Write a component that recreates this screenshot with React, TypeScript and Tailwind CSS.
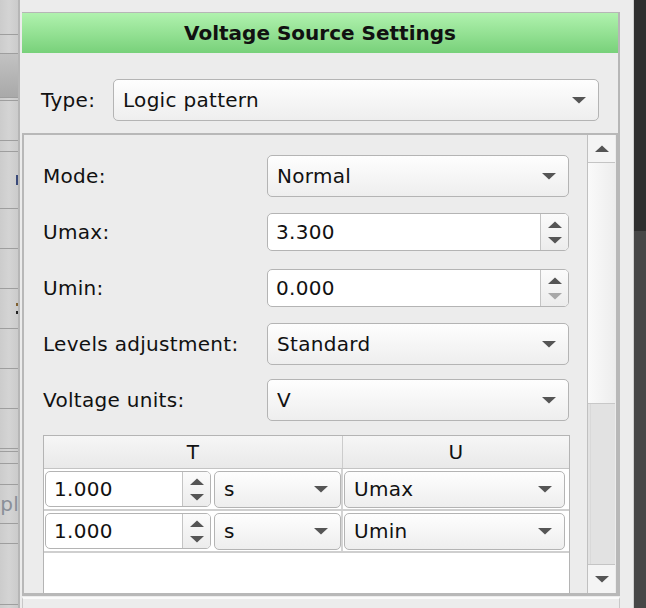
import React from "react";

function Tri({ up = false, color = "#555555" }: { up?: boolean; color?: string }) {
  return (
    <svg width="14" height="7" viewBox="0 0 14 7" className="shrink-0">
      <path d={up ? "M0 7 L7 0.5 L14 7 Z" : "M0 0 L14 0 L7 6.5 Z"} fill={color} />
    </svg>
  );
}

function Combo({ value, className }: { value: string; className: string }) {
  return (
    <div
      className={`flex items-center justify-between rounded-[5px] border border-[#b4b4b4] bg-linear-to-b from-[#fefefe] to-[#eeeeee] pl-[9px] pr-[12px] ${className}`}
    >
      <span>{value}</span>
      <Tri />
    </div>
  );
}

function Spin({
  value,
  className,
  downDisabled = false,
}: {
  value: string;
  className: string;
  downDisabled?: boolean;
}) {
  return (
    <div className={`flex overflow-hidden rounded-[5px] border border-[#b4b4b4] bg-white ${className}`}>
      <div className="flex flex-1 items-center pl-[8px]">{value}</div>
      <div className="flex w-[28px] flex-col items-center justify-center gap-[9px] border-l border-[#c4c4c4] bg-linear-to-b from-[#fbfbfb] to-[#ececec]">
        <Tri up />
        <Tri color={downDisabled ? "#a8a8a8" : "#555555"} />
      </div>
    </div>
  );
}

// cut-off neighbour window on the left edge
const stripCells: { h: number; dark?: boolean; mark?: string }[] = [
  { h: 35 },
  { h: 19 },
  { h: 44, dark: true },
  { h: 3 },
  { h: 40 },
  { h: 11 },
  { h: 57, mark: "bar" },
  { h: 40 },
  { h: 40 },
  { h: 40, mark: "colon" },
  { h: 40 },
  { h: 40 },
  { h: 40 },
  { h: 3 },
  { h: 12 },
  { h: 21 },
  { h: 39, mark: "pl" },
  { h: 20 },
  { h: 61 },
];

function LeftStrip() {
  return (
    <div className="flex w-[20px] shrink-0 flex-col border-r-2 border-[#b6b6b6] bg-linear-to-r from-[#cccccc] via-[#d4d4d4] to-[#cbcbcb]">
      {stripCells.map((c, i) => (
        <div
          key={i}
          style={{ height: c.h }}
          className={`flex shrink-0 items-center justify-end overflow-hidden border-b border-[#9e9e9e] ${
            c.dark ? "bg-linear-to-b from-[#c2c2c2] to-[#a9a9a9]" : ""
          }`}
        >
          {c.mark === "bar" && <div className="h-[10px] w-[2px] bg-[#3a4a7a]" />}
          {c.mark === "colon" && (
            <div className="flex flex-col gap-[5px]">
              <div className="h-[3px] w-[2px] bg-[#806030]" />
              <div className="h-[3px] w-[2px] bg-[#222222]" />
            </div>
          )}
          {c.mark === "pl" && <span className="-mr-[1px] text-[20px] leading-none text-[#8a8f99]">pl</span>}
        </div>
      ))}
    </div>
  );
}

const rows = [
  { label: "Mode:", kind: "combo", value: "Normal" },
  { label: "Umax:", kind: "spin", value: "3.300" },
  { label: "Umin:", kind: "spin", value: "0.000", downDisabled: true },
  { label: "Levels adjustment:", kind: "combo", value: "Standard" },
  { label: "Voltage units:", kind: "combo", value: "V" },
];

const pattern = [
  { t: "1.000", unit: "s", u: "Umax" },
  { t: "1.000", unit: "s", u: "Umin" },
];

export default function App() {
  return (
    <div className="flex h-[608px] w-[646px] overflow-hidden bg-[#ececec] font-['DejaVu_Sans',sans-serif] text-[20px] tracking-[0.3px] text-[#111111]">
      <LeftStrip />

      <div className="flex w-[613px] shrink-0 flex-col pl-[2px]">
        <div className="h-[12px] shrink-0" />
        <div className="flex w-[598px] flex-col">
          <div className="flex h-[41px] items-center justify-center border-t border-r-2 border-[#b6b6b6] bg-linear-to-b from-[#b0f2ae] to-[#78d17a] font-bold tracking-normal">
            Voltage Source Settings
          </div>

          <div className="flex h-[80px] items-start border-r-2 border-[#b6b6b6] pl-[19px] pt-[26px]">
            <span className="flex h-[42px] w-[72px] items-center">Type:</span>
            <Combo value="Logic pattern" className="h-[42px] w-[486px]" />
          </div>

          <div className="flex h-[463px] border-t-2 border-l-2 border-r-4 border-b-[3px] border-[#b8b8b8]">
            <div className="flex w-[564px] flex-col overflow-hidden border-r border-[#c0c0c0] pl-[19px] pt-[13px]">
              {rows.map((r) => (
                <div key={r.label} className="flex h-[56px] shrink-0 items-center">
                  <span className="w-[224px]">{r.label}</span>
                  {r.kind === "combo" ? (
                    <Combo value={r.value} className="h-[42px] w-[302px]" />
                  ) : (
                    <Spin value={r.value} downDisabled={r.downDisabled} className="h-[38px] w-[302px]" />
                  )}
                </div>
              ))}

              <div className="mt-[7px] flex h-[200px] w-[527px] shrink-0 flex-col border border-[#b4b4b4] bg-white">
                <div className="flex h-[33px] border-b border-[#c4c4c4] bg-linear-to-b from-[#f6f6f6] to-[#e9e9e9]">
                  <div className="flex w-[299px] items-center justify-center border-r border-[#cccccc]">T</div>
                  <div className="flex flex-1 items-center justify-center">U</div>
                </div>
                {pattern.map((p, i) => (
                  <div key={i} className="flex h-[42px] border-b-2 border-[#cfcfcf]">
                    <div className="flex w-[299px] items-center gap-[3px] border-r-2 border-[#d4d4d4] pl-[1px]">
                      <Spin value={p.t} className="h-[36px] w-[166px]" />
                      <Combo value={p.unit} className="h-[37px] w-[127px]" />
                    </div>
                    <div className="flex flex-1 items-center pl-[1px]">
                      <Combo value={p.u} className="h-[37px] w-[221px]" />
                    </div>
                  </div>
                ))}
              </div>
            </div>

            <div className="flex w-[27px] flex-col">
              <div className="flex h-[28px] items-center justify-center border-b border-[#c4c4c4] bg-[#f4f4f4]">
                <Tri up />
              </div>
              <div className="h-[240px] bg-linear-to-r from-[#fafafa] to-[#ededed]" />
              <div className="flex-1 border-t border-[#c8c8c8] bg-[#e2e2e2] pl-[2px]">
                <div className="h-full border-l border-[#d9d9d9]" />
              </div>
              <div className="flex h-[29px] items-center justify-center border-t border-[#c4c4c4] bg-[#f4f4f4]">
                <Tri />
              </div>
            </div>
          </div>

          <div className="mt-[1px] h-[12px] w-[598px] border-x border-t-2 border-x-[#c8c8c8] border-t-[#fafafa] bg-[#ececec]" />
        </div>
      </div>

      <div className="w-[13px] shrink-0 border-l border-[#cfcfcf] bg-linear-to-b from-[#2f2f2f] from-[38%] to-[#474747] to-[38%]" />
    </div>
  );
}
